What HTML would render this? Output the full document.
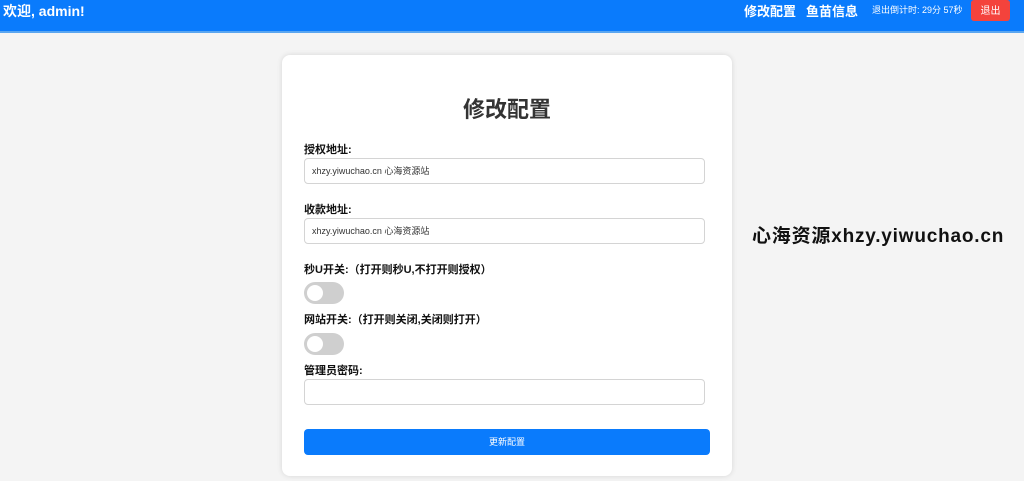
<!DOCTYPE html>
<html><head><meta charset="utf-8"><style>
*{box-sizing:border-box;margin:0;padding:0}
body{width:1024px;height:481px;overflow:hidden;background:#f4f4f4;font-family:"Liberation Sans","Noto Sans CJK SC",sans-serif;position:relative}
.hd{position:absolute;left:0;top:0;width:1024px;height:33px;background:#0a7bfc;color:#fff;border-bottom:2px solid #5aa6f0}
.hd .w{position:absolute;left:3px;top:1px;font-size:14px;font-weight:bold}
.hd .n{position:absolute;top:1px;font-size:13px;font-weight:bold}
.hd .t{position:absolute;left:872px;top:3px;font-size:9px}
.hd .b{position:absolute;left:971px;top:0;width:39px;height:21px;background:#f4433c;border-radius:3px;font-size:10px;text-align:center;line-height:24px}
.card{position:absolute;left:282px;top:55px;width:450px;height:421px;background:#fff;border-radius:8px;box-shadow:0 0 6px rgba(0,0,0,.12)}
h1{position:absolute;left:0;width:450px;top:37px;text-align:center;font-size:22px;color:#333}
.l{position:absolute;left:22px;font-size:11px;font-weight:bold;color:#111}
.i{position:absolute;left:22px;width:401px;height:26px;border:1px solid #d4d4d4;border-radius:4px;font-size:9px;color:#333;padding-left:7px;line-height:25px}
.tg{position:absolute;left:22px;width:40px;height:22px;border-radius:11px;background:#cfcfcf}
.tg:after{content:"";position:absolute;left:3px;top:3px;width:16px;height:16px;border-radius:50%;background:#fff}
.btn{position:absolute;left:22px;top:374px;width:406px;height:26px;background:#0a7bfc;border-radius:4px;color:#fff;font-size:9px;text-align:center;line-height:26px}
.wm{position:absolute;left:752px;top:221px;font-size:19px;font-weight:bold;color:#111;letter-spacing:0.8px}
</style></head><body>
<div class="hd"><div class="w">欢迎, admin!</div><div class="n" style="left:744px">修改配置</div><div class="n" style="left:806px">鱼苗信息</div><div class="t">退出倒计时: 29分 57秒</div><div class="b">退出</div></div>
<div class="card">
<h1>修改配置</h1>
<div class="l" style="top:86px">授权地址:</div>
<div class="i" style="top:103px">xhzy.yiwuchao.cn 心海资源站</div>
<div class="l" style="top:146px">收款地址:</div>
<div class="i" style="top:163px">xhzy.yiwuchao.cn 心海资源站</div>
<div class="l" style="top:206px">秒U开关:（打开则秒U,不打开则授权）</div>
<div class="tg" style="top:227px"></div>
<div class="l" style="top:256px">网站开关:（打开则关闭,关闭则打开）</div>
<div class="tg" style="top:278px"></div>
<div class="l" style="top:307px">管理员密码:</div>
<div class="i" style="top:324px"></div>
<div class="btn">更新配置</div>
</div>
<div class="wm">心海资源xhzy.yiwuchao.cn</div>
</body></html>
